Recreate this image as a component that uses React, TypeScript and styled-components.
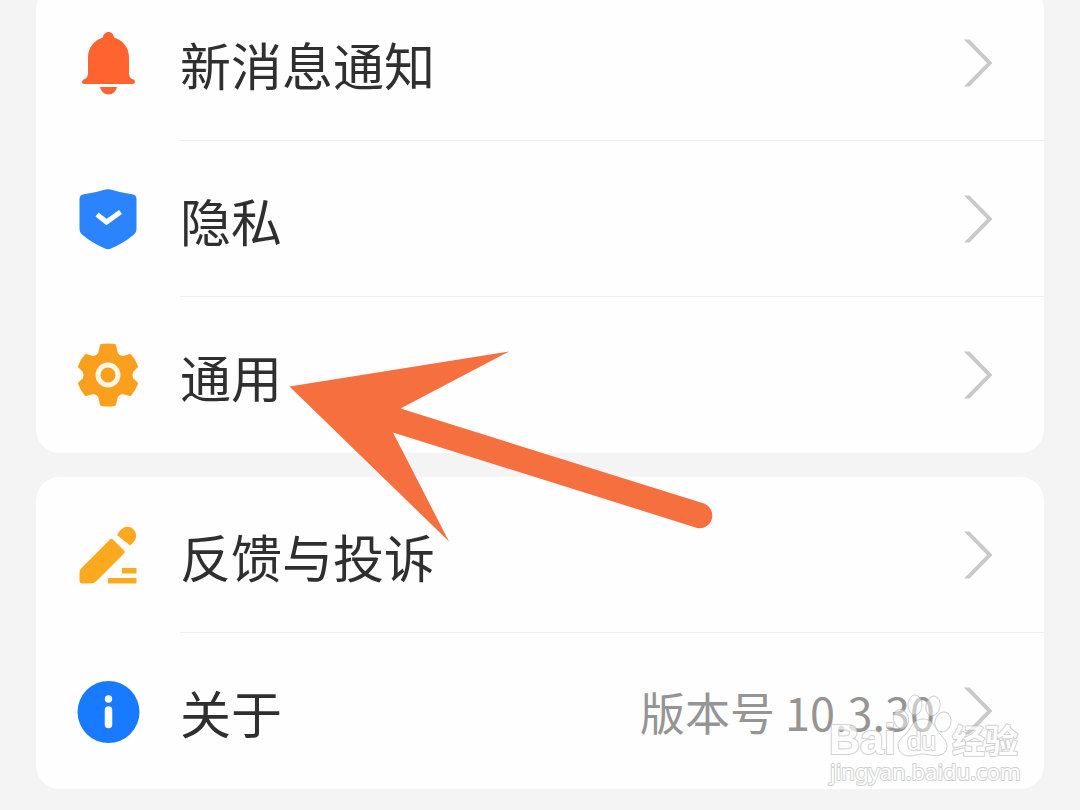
import React from "react";
import styled, { createGlobalStyle } from "styled-components";

const GlobalStyle = createGlobalStyle`
  * { box-sizing: border-box; }
  body {
    margin: 0;
    background: #f4f4f4;
    font-family: "Noto Sans CJK SC", sans-serif;
    color: #2f2f2f;
  }
`;

const Page = styled.main`
  position: relative;
  overflow: hidden;
`;

const Groups = styled.div`
  display: flex;
  flex-direction: column;
  gap: 24px;
  margin-top: -15px;
  padding: 0 36px 21px;
`;

const Card = styled.ul`
  list-style: none;
  margin: 0;
  padding: 0;
  background: #fefefe;
  border-radius: 24px;
`;

const RowLink = styled.a`
  display: flex;
  align-items: stretch;
  gap: 40px;
  padding-left: 40px;
  height: 156px;
  color: inherit;
  text-decoration: none;
`;

const IconSlot = styled.span`
  display: flex;
  align-items: center;
`;

const RowBody = styled.span<{ $divided: boolean }>`
  flex: 1;
  display: flex;
  align-items: center;
  padding-right: 51px;
  border-bottom: 1px solid ${(p) => (p.$divided ? "#eeeeee" : "transparent")};
`;

const Label = styled.span`
  flex: 1;
  font-size: 51px;
  line-height: 72px;
  padding-top: 2px;
`;

const Value = styled.span`
  font-size: 45px;
  line-height: 72px;
  padding-top: 2px;
  margin-right: 28px;
  color: #959595;
`;

const Arrow = styled.svg`
  position: absolute;
  left: 288px;
  top: 348px;
  pointer-events: none;
`;

const Watermark = styled.div`
  position: absolute;
  right: 59px;
  bottom: 22px;
  width: 194px;
  pointer-events: none;
  opacity: 0.7;
  svg { display: block; overflow: visible; }
`;

const MarkText = styled.text`
  fill: #ffffff;
  stroke: #bdbdbd;
  stroke-width: 2px;
  stroke-linejoin: round;
  paint-order: stroke;
`;

const BellIcon = () => (
  <svg width="64" height="64" viewBox="0 0 64 64" aria-hidden="true">
    <path
      fill="#ff6430"
      d="M27 6.500C27 3.500 29.500 1 32.500 1S38 3.500 38 6.500C46.500 9 53 16.500 53 26V42C53 45 54 47 56 48L57.500 48.500C59.500 49.500 59.500 53 57 53H8C5.500 53 5.500 49.500 7.500 48.500L9 48C11 47 12 45 12 42V26C12 16.500 18.500 9 27 6.500ZM24 56h17c-1 4.500-4.200 7.500-8.500 7.500S25 60.500 24 56Z"
    />
  </svg>
);

const ShieldIcon = () => (
  <svg width="64" height="64" viewBox="0 0 64 64" aria-hidden="true">
    <path
      fill="#2b83fd"
      d="M29.500 2.500Q32 1.800 34.500 2.500Q44 5.600 56 7.200Q60.500 8 60.500 12V42Q60.500 45.500 58 47.500Q48 56 35 61.500Q32 63 29 61.500Q16 56 6 47.500Q3.500 45.500 3.500 42V12Q3.500 8 8 7.200Q20 5.600 29.500 2.500Z"
    />
    <path d="M21 27.500l9.500 7.500L44.500 25" fill="none" stroke="#fff" strokeWidth="5" />
  </svg>
);

const GearIcon = () => (
  <svg width="64" height="64" viewBox="0 0 64 64" aria-hidden="true">
    <path
      fill="#fb9f1e"
      stroke="#fb9f1e"
      strokeWidth="3"
      strokeLinejoin="round"
      d="M25.500 2.500Q32 1.500 38.500 2.500L40.500 10.500Q43 14.500 47.500 14.500L54 12.500Q58.500 17.500 60.500 23.500L56 28Q54 32 56 36L60.500 40.500Q58.500 46.500 54 51.500L47.500 49.500Q43 49.500 40.500 53.500L38.500 61.500Q32 62.500 25.500 61.500L23.500 53.500Q21 49.500 16.500 49.500L10 51.500Q5.500 46.500 3.500 40.500L8 36Q10 32 8 28L3.500 23.500Q5.500 17.500 10 12.500L16.500 14.500Q21 14.500 23.500 10.500Z"
    />
    <circle cx="32" cy="32" r="10" fill="none" stroke="#fff7e4" strokeWidth="5" />
  </svg>
);

const PencilIcon = () => (
  <svg width="64" height="64" viewBox="0 0 64 64" aria-hidden="true">
    <path
      fill="#fbaa1f"
      d="M34 16.500Q35.500 15 37 16.500L48 27.500Q49.500 29 48 30.500L20.500 58Q18 60.500 14.500 60.500H6.500Q3.500 60.500 3.500 57.500V50Q3.500 46.500 6 44.500ZM41 12C46 2.500 53 2 57 6C61.500 10 62 16.500 54 22.500Z"
    />
    <path fill="#fbaa1f" d="M46 45h14.500v5.500H46zM32 55h28.500v5.500H32z" />
  </svg>
);

const InfoIcon = () => (
  <svg width="64" height="64" viewBox="0 0 64 64" aria-hidden="true">
    <circle cx="32.500" cy="33" r="31" fill="#187aff" />
    <circle cx="32.500" cy="20" r="3.700" fill="#fff" />
    <path d="M32.500 31v14.500" stroke="#fff" strokeWidth="7.500" strokeLinecap="round" />
  </svg>
);

const Chevron = () => (
  <svg width="30" height="50" viewBox="0 0 30 50" aria-hidden="true">
    <path d="M1 1.500H6.500L29 24.500Q29.500 25 29 25.500L6.500 48.500H1L24 25Z" fill="#c9c9c9" />
  </svg>
);

interface RowProps {
  icon: React.ReactNode;
  label: string;
  value?: string;
  last?: boolean;
}

const Row = ({ icon, label, value, last = false }: RowProps) => (
  <li>
    <RowLink href="#">
      <IconSlot>{icon}</IconSlot>
      <RowBody $divided={!last}>
        <Label>{label}</Label>
        {value && <Value>{value}</Value>}
        <Chevron />
      </RowBody>
    </RowLink>
  </li>
);

export default function App() {
  return (
    <>
      <GlobalStyle />
      <Page>
        <Groups>
          <Card>
            <Row icon={<BellIcon />} label="新消息通知" />
            <Row icon={<ShieldIcon />} label="隐私" />
            <Row icon={<GearIcon />} label="通用" last />
          </Card>
          <Card>
            <Row icon={<PencilIcon />} label="反馈与投诉" />
            <Row icon={<InfoIcon />} label="关于" value="版本号 10.3.30" last />
          </Card>
        </Groups>
        <Arrow width="428" height="196" viewBox="288 348 428 196" aria-hidden="true">
          <path
            fill="#f66f3f"
            d="M289.500 386.500L509 351.500L400.500 408.500L704 503.500A12.800 12.800 0 0 1 698 528.200L393 432.500L449 541.500Z"
          />
        </Arrow>
        <Watermark>
          <svg width="194" height="96" viewBox="827 692 194 96">
            <g fill="#ffffff" fillOpacity="0.700" stroke="#bdbdbd" strokeWidth="1">
              <ellipse cx="901" cy="719" rx="7.500" ry="9.500" transform="rotate(-15 901 719)" />
              <ellipse cx="915" cy="705" rx="7" ry="10" />
              <ellipse cx="933" cy="706" rx="7" ry="10" transform="rotate(12 933 706)" />
              <ellipse cx="943" cy="722" rx="8" ry="10" transform="rotate(15 943 722)" />
              <path d="M923 719C930 719 934 724 937 730C941 736 947 740 947 746C947 753 941 756 934 755.500C929 755 927 754 922 754C917 754 915 756 909 756C902 755.500 898 751 898 745C898 739 905 736 909 730C912 724 916 719 923 719Z" />
            </g>
            <MarkText x="829" y="754" fontFamily="Liberation Sans" fontWeight="700" fontSize="43">Bai</MarkText>
            <MarkText x="907" y="750" fontFamily="Liberation Sans" fontSize="26">du</MarkText>
            <MarkText x="952" y="753" fontFamily="Noto Sans CJK SC" fontWeight="700" fontSize="33">经验</MarkText>
            <MarkText x="830" y="780" fontFamily="Noto Sans" fontSize="22">jingyan.baidu.com</MarkText>
          </svg>
        </Watermark>
      </Page>
    </>
  );
}
